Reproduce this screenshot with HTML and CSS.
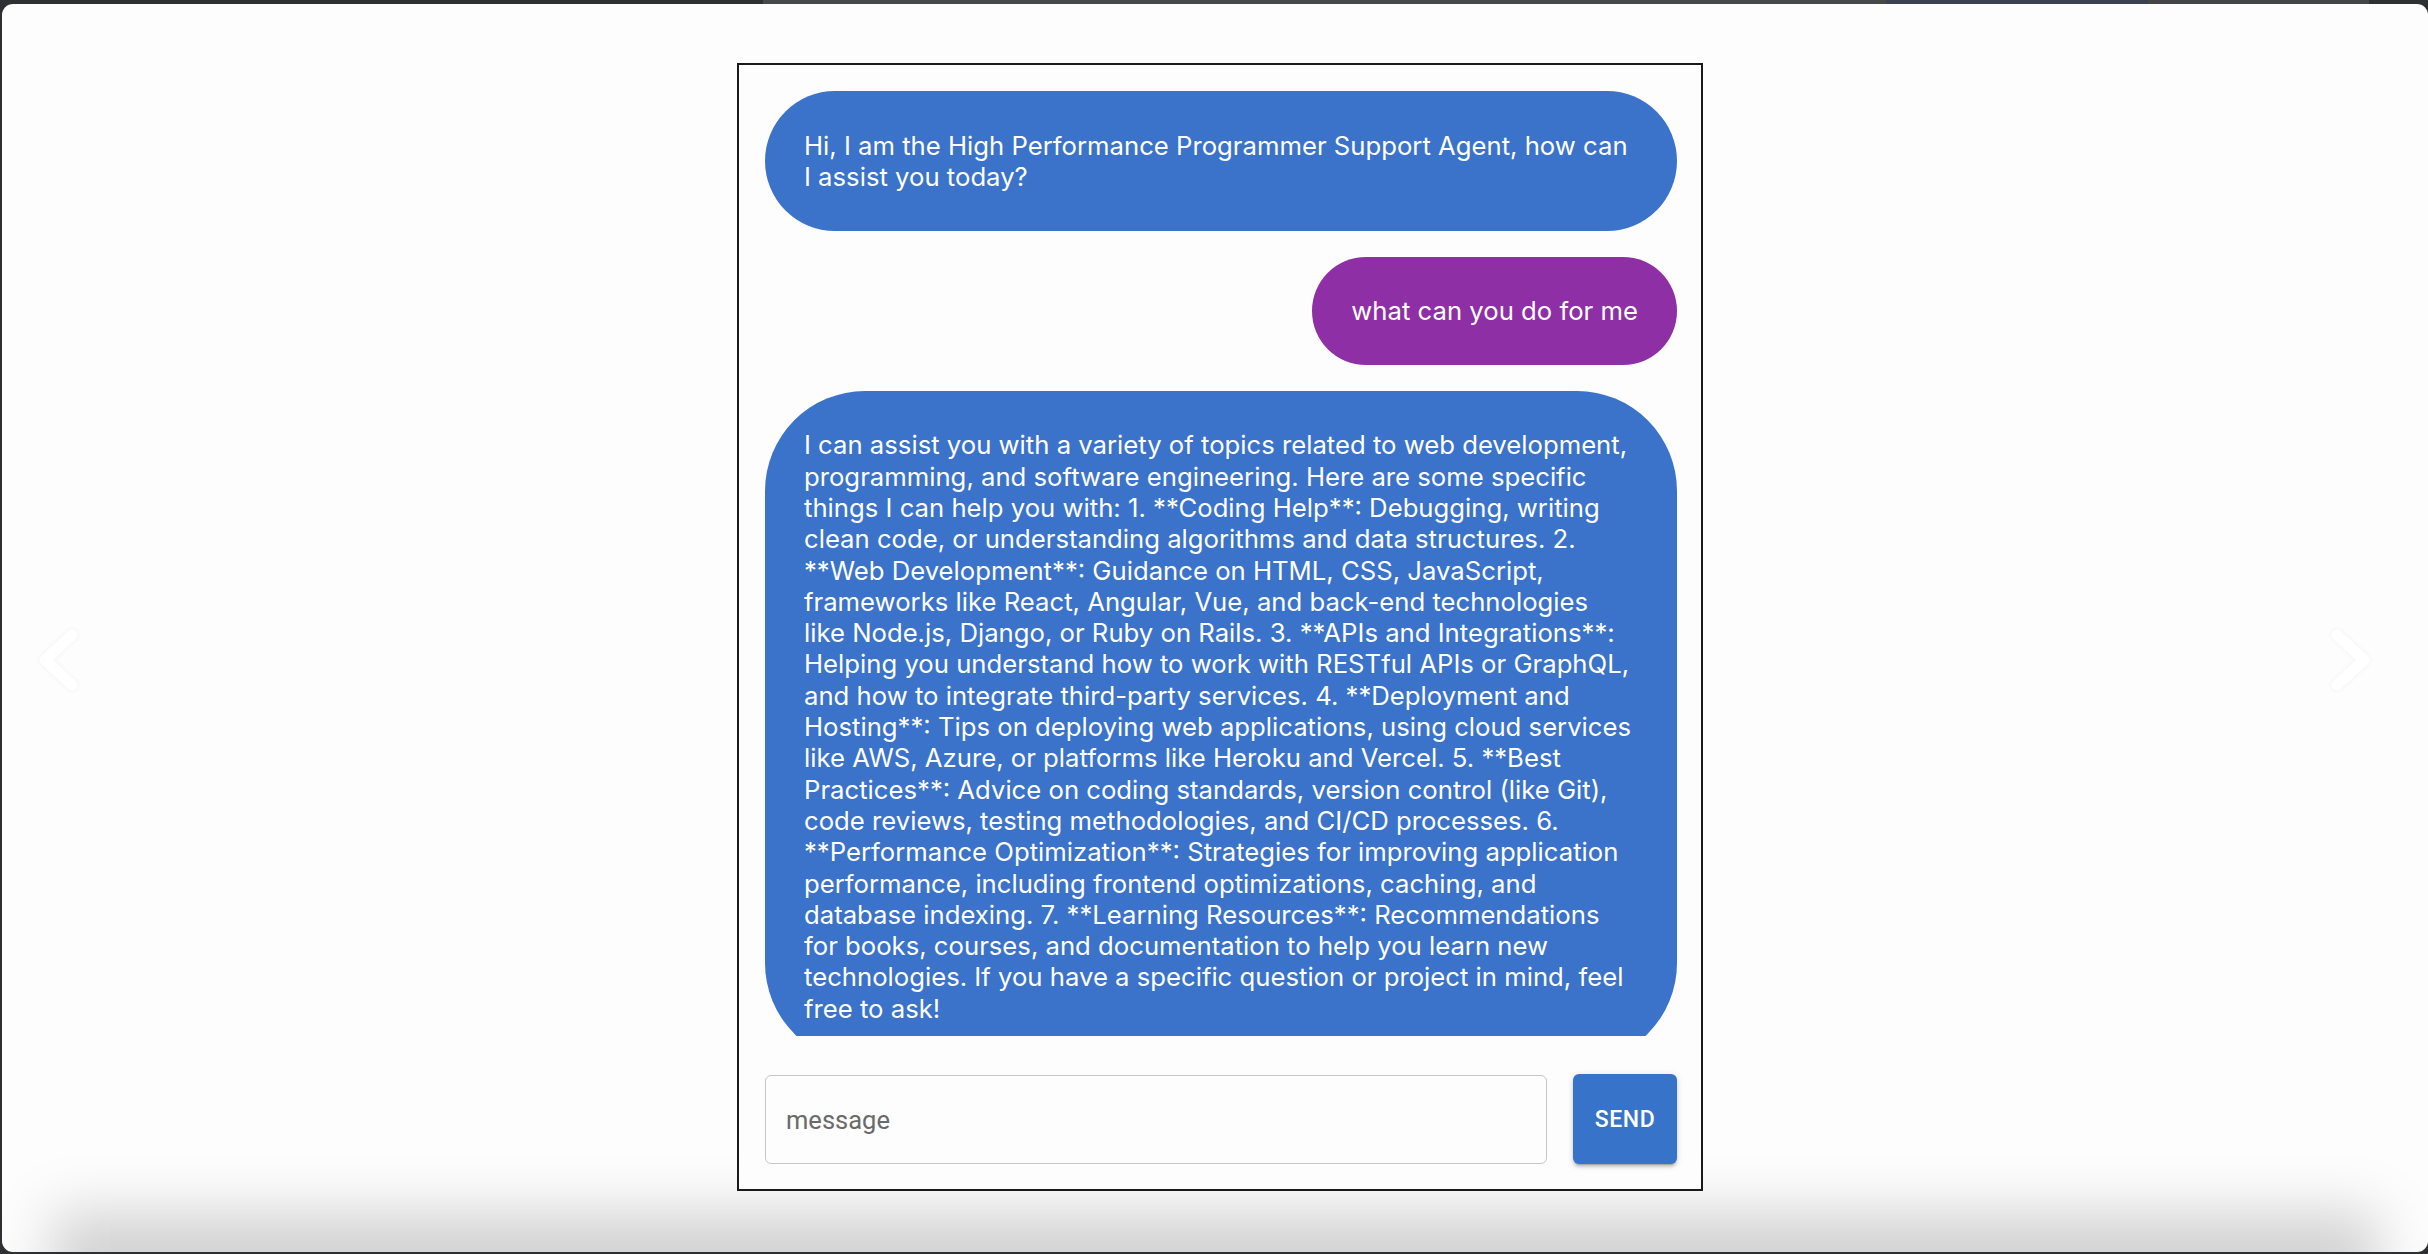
FILE: index.html
```html
<!DOCTYPE html>
<html lang="en">
<head>
<meta charset="utf-8">
<title>High Performance Programmer Support Agent</title>
<link rel="stylesheet" href="styles.css">
</head>
<body>
<div class="desk-strip">
  <span class="seg seg-dark1"></span>
  <span class="seg seg-gray1"></span>
  <span class="seg seg-blue"></span>
  <span class="seg seg-gray2"></span>
  <span class="seg seg-dark2"></span>
</div>
<main class="window">
  <svg class="nav nav-left" width="52" height="78" viewBox="0 0 52 78" aria-hidden="true">
    <path d="M39 12 L12 37 L39 62" fill="none" stroke="#ffffff" stroke-width="11" stroke-linecap="round" stroke-linejoin="round"/>
  </svg>

  <section class="chat">
    <div class="messages">
      <div class="bubble bot">Hi, I am the High Performance Programmer Support Agent, how can I assist you today?</div>
      <div class="bubble user">what can you do for me</div>
      <div class="bubble bot">I can assist you with a variety of topics related to web development, programming, and software engineering. Here are some specific things I can help you with: 1. **Coding Help**: Debugging, writing clean code, or understanding algorithms and data structures. 2. **Web Development**: Guidance on HTML, CSS, JavaScript, frameworks like React, Angular, Vue, and back-end technologies like Node.js, Django, or Ruby on Rails. 3. **APIs and Integrations**: Helping you understand how to work with RESTful APIs or GraphQL, and how to integrate third-party services. 4. **Deployment and Hosting**: Tips on deploying web applications, using cloud services like AWS, Azure, or platforms like Heroku and Vercel. 5. **Best Practices**: Advice on coding standards, version control (like Git), code reviews, testing methodologies, and CI/CD processes. 6. **Performance Optimization**: Strategies for improving application performance, including frontend optimizations, caching, and database indexing. 7. **Learning Resources**: Recommendations for books, courses, and documentation to help you learn new technologies. If you have a specific question or project in mind, feel free to ask!</div>
    </div>
    <form class="composer" onsubmit="return false;">
      <div class="field">
        <input class="field-input" type="text" placeholder="message">
      </div>
      <button class="send" type="submit">SEND</button>
    </form>
  </section>

  <svg class="nav nav-right" width="52" height="78" viewBox="0 0 52 78" aria-hidden="true">
    <path d="M13 12 L40 37 L13 62" fill="none" stroke="#ffffff" stroke-width="11" stroke-linecap="round" stroke-linejoin="round"/>
  </svg>
  <div class="floor-shadow"></div>
</main>
</body>
</html>
```

FILE: styles.css
```css
* {
  box-sizing: border-box;
}

html, body {
  margin: 0;
  padding: 0;
}

body {
  width: 2428px;
  height: 1254px;
  overflow: hidden;
  background: #2d2f33;
  font-family: Inter, "Noto Sans", sans-serif;
}

.desk-strip {
  display: flex;
  height: 4px;
}

.seg {
  display: block;
  height: 100%;
}

.seg-dark1 { width: 763px; background: #2e3034; }
.seg-gray1 { width: 1123px; background: #47484a; }
.seg-blue  { width: 262px; background: #3a4252; }
.seg-gray2 { width: 221px; background: #444547; }
.seg-dark2 { flex: 1; background: #2e3034; }

.window {
  position: relative;
  margin-left: 2px;
  width: 2426px;
  height: 1248px;
  border-radius: 11px;
  background: #fdfdfd;
  overflow: hidden;
  display: flex;
  justify-content: center;
  align-items: flex-start;
  padding-top: 59px;
  padding-left: 10px;
}

.nav {
  position: absolute;
  top: 619px;
  filter: drop-shadow(0 0 2px rgba(0, 0, 0, 0.05));
}

.nav-left { left: 31px; }
.nav-right { left: 2322px; }

.floor-shadow {
  position: absolute;
  left: 50px;
  right: 50px;
  bottom: -70px;
  height: 110px;
  background: rgba(0, 0, 0, 0.17);
  filter: blur(28px);
  pointer-events: none;
}

.chat {
  position: relative;
  z-index: 1;
  width: 966px;
  height: 1128px;
  border: 2px solid #1a1a1a;
  background: #fdfdfd;
  display: flex;
  flex-direction: column;
  padding: 0 24px 25px 26px;
}

.messages {
  height: 971px;
  flex-shrink: 0;
  overflow: hidden;
  padding-top: 26px;
  display: flex;
  flex-direction: column;
  align-items: stretch;
  gap: 26px;
}

.bubble {
  flex-shrink: 0;
  color: #ffffff;
  font-family: Inter, "Noto Sans", sans-serif;
  font-size: 25.7px;
  line-height: 31.3px;
  padding: 38.5px 39px;
  border-radius: 100px;
}

.bot {
  background: #3a73c9;
  align-self: stretch;
  padding-right: 43px;
}

.user {
  background: #8e2fa6;
  align-self: flex-end;
}

.composer {
  margin: 39px 0 0;
  height: 89px;
  display: flex;
  gap: 26px;
}

.field {
  flex: 1;
  display: flex;
}

.field-input {
  width: 100%;
  height: 100%;
  border: 1.5px solid #c6c6c6;
  border-radius: 6px;
  background: transparent;
  padding: 0 20px;
  font-family: Roboto, "Liberation Sans", sans-serif;
  font-size: 25.5px;
  color: #222;
  outline: none;
}

.field-input::placeholder {
  color: #6a6a6a;
  opacity: 1;
}

.send {
  width: 104px;
  height: 90px;
  margin-top: -1px;
  border: none;
  border-radius: 6px;
  background: #3873ca;
  color: #ffffff;
  font-family: Roboto, "Liberation Sans", sans-serif;
  font-weight: 500;
  font-size: 23px;
  letter-spacing: 0.6px;
  box-shadow: 0 4px 1.5px -3px rgba(0, 0, 0, 0.2), 0 3px 3px 0 rgba(0, 0, 0, 0.14), 0 1.5px 7.5px 0 rgba(0, 0, 0, 0.12);
  cursor: pointer;
}
```
